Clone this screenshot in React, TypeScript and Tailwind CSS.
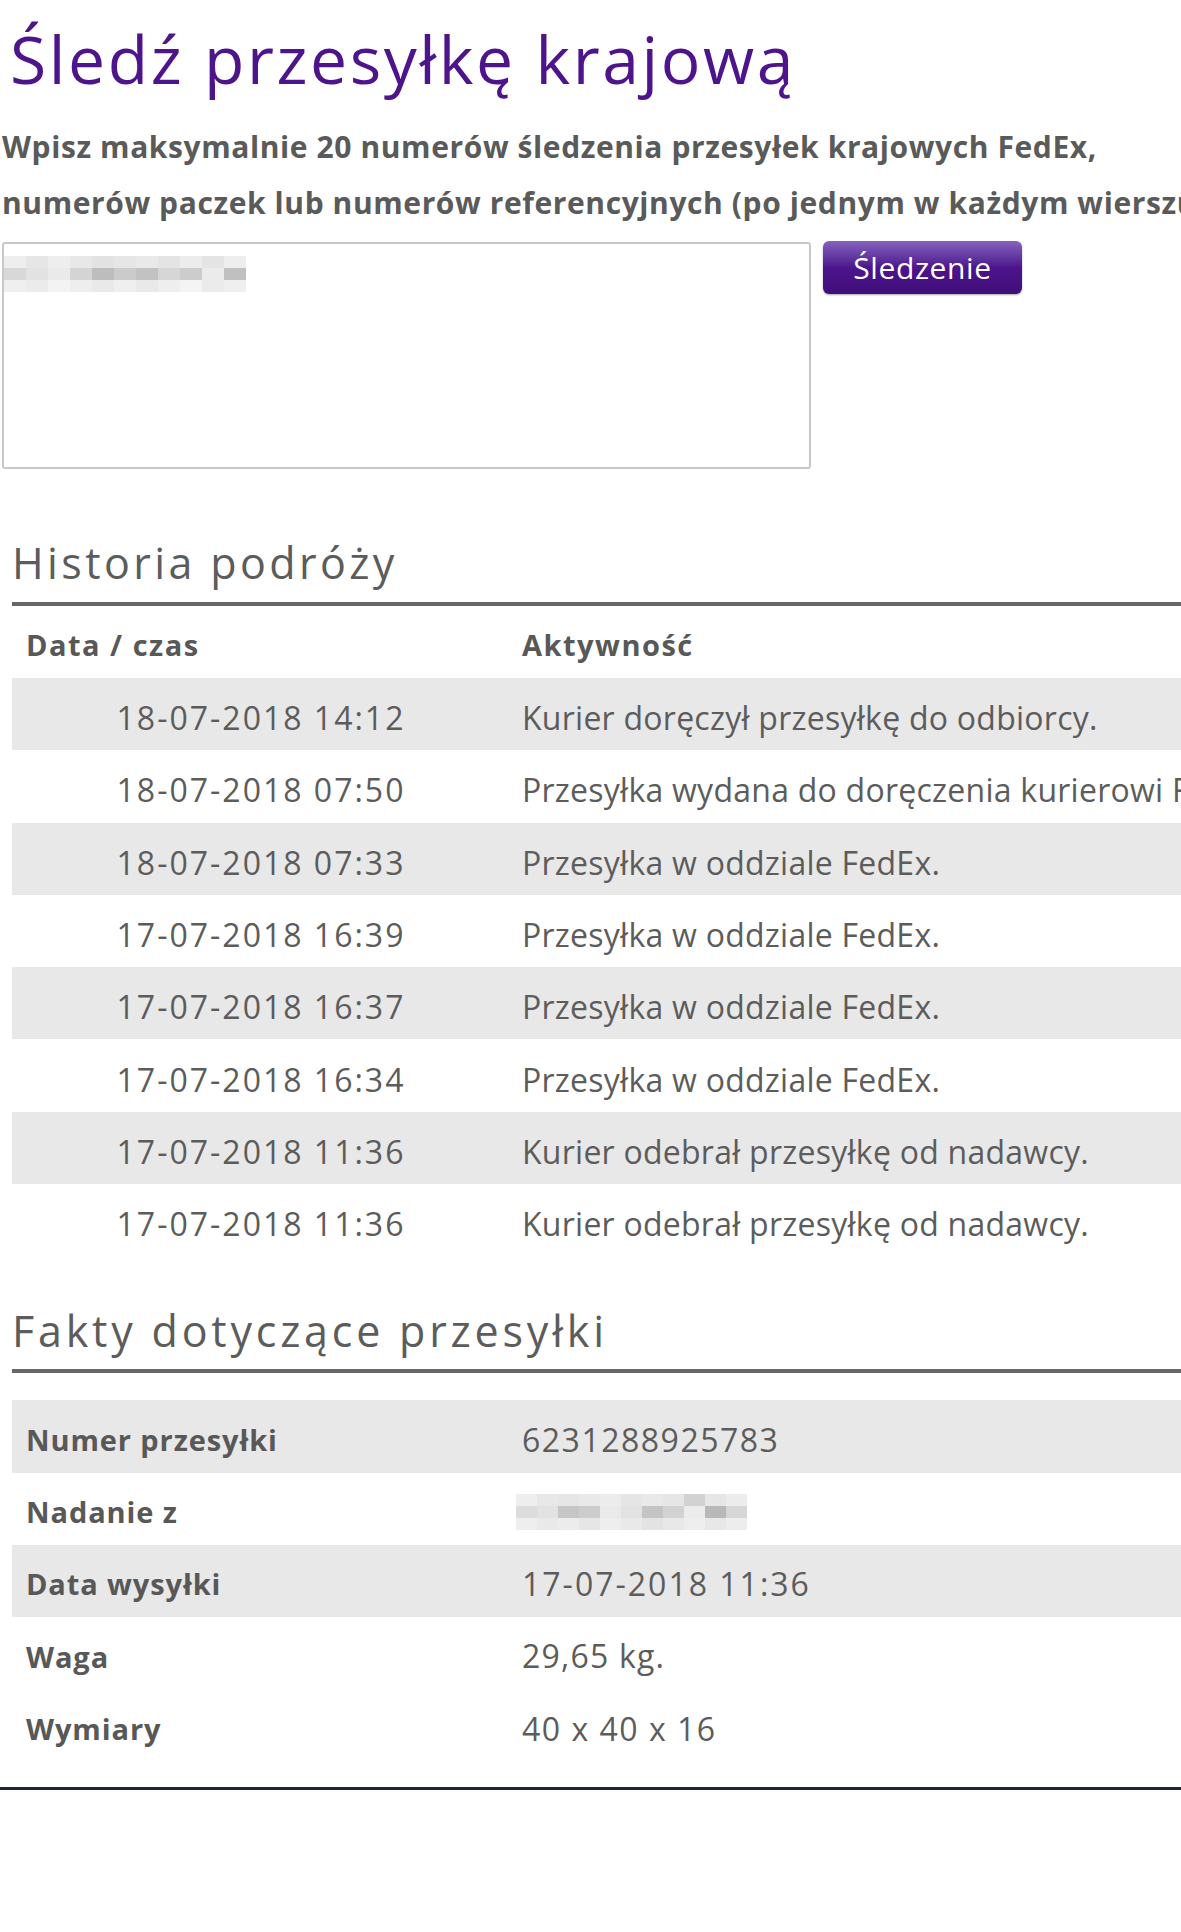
import React from "react";

const history: [string, string][] = [
  ["18-07-2018 14:12", "Kurier doręczył przesyłkę do odbiorcy."],
  ["18-07-2018 07:50", "Przesyłka wydana do doręczenia kurierowi FedEx."],
  ["18-07-2018 07:33", "Przesyłka w oddziale FedEx."],
  ["17-07-2018 16:39", "Przesyłka w oddziale FedEx."],
  ["17-07-2018 16:37", "Przesyłka w oddziale FedEx."],
  ["17-07-2018 16:34", "Przesyłka w oddziale FedEx."],
  ["17-07-2018 11:36", "Kurier odebrał przesyłkę od nadawcy."],
  ["17-07-2018 11:36", "Kurier odebrał przesyłkę od nadawcy."],
];

const blur1 = [
  ["#eee", "#e6e6e6", "#eee", "#e8e8e8", "#e2e2e2", "#e6e6e6", "#e9e9e9", "#e4e4e4", "#ececec", "#e4e4e4", "#eee"],
  ["#d8d8d8", "#e2e2e2", "#eaeaea", "#d4d4d4", "#bdbdbd", "#cbcbcb", "#c2c2c2", "#d6d6d6", "#cccccc", "#ebebeb", "#c0c0c0"],
  ["#efefef", "#ebebeb", "#f3f3f3", "#eeeeee", "#e9e9e9", "#efefef", "#e9e9e9", "#eeeeee", "#f4f4f4", "#ebebeb", "#efefef"],
];

const blur2 = [
  ["#eee", "#e8e8e8", "#e6e6e6", "#e9e9e9", "#ececec", "#e5e5e5", "#e9e9e9", "#e6e6e6", "#d2d2d2", "#e6e6e6", "#ececec"],
  ["#dcdcdc", "#e2e2e2", "#c6c6c6", "#cccccc", "#eaeaea", "#e2e2e2", "#c4c4c4", "#d2d2d2", "#ebebeb", "#b8b8b8", "#d6d6d6"],
  ["#eeeeee", "#e9e9e9", "#ececec", "#e6e6e6", "#eeeeee", "#e9e9e9", "#e3e3e3", "#e8e8e8", "#eeeeee", "#e8e8e8", "#ededed"],
];

function Mosaic({ grid, cell, h }: { grid: string[][]; cell: number; h: number }) {
  return (
    <div className="flex flex-col">
      {grid.map((row, i) => (
        <div key={i} className="flex">
          {row.map((c, j) => (
            <div key={j} style={{ width: cell, height: h, backgroundColor: c }} />
          ))}
        </div>
      ))}
    </div>
  );
}

function FactRow({ label, gray, children }: { label: string; gray?: boolean; children: React.ReactNode }) {
  return (
    <div className={`ml-[12px] h-[72.3px] pt-[6px] flex items-center whitespace-nowrap ${gray ? "bg-[#e8e8e8]" : ""}`}>
      <div className="w-[510px] shrink-0 pl-[14px] text-[29px] tracking-[0.9px] font-bold text-[#585858]">{label}</div>
      {children}
    </div>
  );
}

export default function App() {
  return (
    <div className="w-[1181px] h-[1932px] bg-white overflow-hidden font-['Open_Sans',sans-serif] text-[#555]">
      <h1 className="pt-[20px] pl-[10px] text-[66px] leading-[77px] tracking-[2.6px] text-[#4d148c] whitespace-nowrap">
        Śledź przesyłkę krajową
      </h1>
      <p className="mt-[22px] pl-[2px] text-[30px] leading-[56px] font-bold tracking-[0.6px] text-[#5a5a5a] whitespace-nowrap">
        Wpisz maksymalnie 20 numerów śledzenia przesyłek krajowych FedEx,
        <br />
        numerów paczek lub numerów referencyjnych (po jednym w każdym wierszu).
      </p>
      <div className="mt-[11px] flex items-start">
        <div className="ml-[2px] w-[809px] h-[227px] shrink-0 border-2 border-[#c8c8c8] rounded-[3px] pt-[12px]">
          <Mosaic grid={blur1} cell={22} h={12} />
        </div>
        <button className="ml-[12px] -mt-[1px] w-[199px] h-[53px] shrink-0 rounded-[6px] bg-gradient-to-b from-[#8662bd] via-[#4d148c] to-[#3f0e78] text-white text-[30px] tracking-[0.6px] leading-[50px] shadow-[0_1px_2px_rgba(0,0,0,0.35)]">
          Śledzenie
        </button>
      </div>

      <h2 className="mt-[69px] pl-[12px] text-[43px] leading-[50px] tracking-[3.4px] text-[#5c5c5c] whitespace-nowrap">
        Historia podróży
      </h2>
      <div className="mt-[14px] ml-[12px] h-[4px] bg-[#666]" />
      <div className="ml-[12px] h-[72px] pt-[6px] flex items-center text-[29px] tracking-[1.5px] font-bold text-[#585858] whitespace-nowrap">
        <div className="w-[510px] shrink-0 pl-[14px]">Data / czas</div>
        <div>Aktywność</div>
      </div>
      {history.map(([d, a], i) => (
        <div
          key={i}
          className={`ml-[12px] h-[72.3px] pt-[8px] flex items-center text-[32px] text-[#5c5c5c] whitespace-nowrap overflow-hidden ${
            i % 2 === 0 ? "bg-[#e8e8e8]" : "bg-white"
          }`}
        >
          <div className="w-[510px] shrink-0 pr-[12px] text-center tracking-[2px]">{d}</div>
          <div className="tracking-[0.25px]">{a}</div>
        </div>
      ))}

      <h2 className="mt-[50px] pl-[12px] text-[43px] leading-[50px] tracking-[3.8px] text-[#5c5c5c] whitespace-nowrap">
        Fakty dotyczące przesyłki
      </h2>
      <div className="mt-[13px] ml-[12px] h-[4px] bg-[#666]" />
      <div className="mt-[27px]">
        <FactRow label="Numer przesyłki" gray>
          <div className="text-[32px] tracking-[1.5px] text-[#5c5c5c]">6231288925783</div>
        </FactRow>
        <FactRow label="Nadanie z">
          <div className="-ml-[6px]">
            <Mosaic grid={blur2} cell={21} h={12} />
          </div>
        </FactRow>
        <FactRow label="Data wysyłki" gray>
          <div className="text-[32px] tracking-[2px] text-[#5c5c5c]">17-07-2018 11:36</div>
        </FactRow>
        <FactRow label="Waga">
          <div className="text-[32px] tracking-[1.2px] text-[#5c5c5c]">29,65 kg.</div>
        </FactRow>
        <FactRow label="Wymiary">
          <div className="text-[32px] tracking-[1.5px] text-[#5c5c5c]">40 x 40 x 16</div>
        </FactRow>
      </div>
      <div className="mt-[25px] h-[3px] bg-[#17283a]" />
    </div>
  );
}
